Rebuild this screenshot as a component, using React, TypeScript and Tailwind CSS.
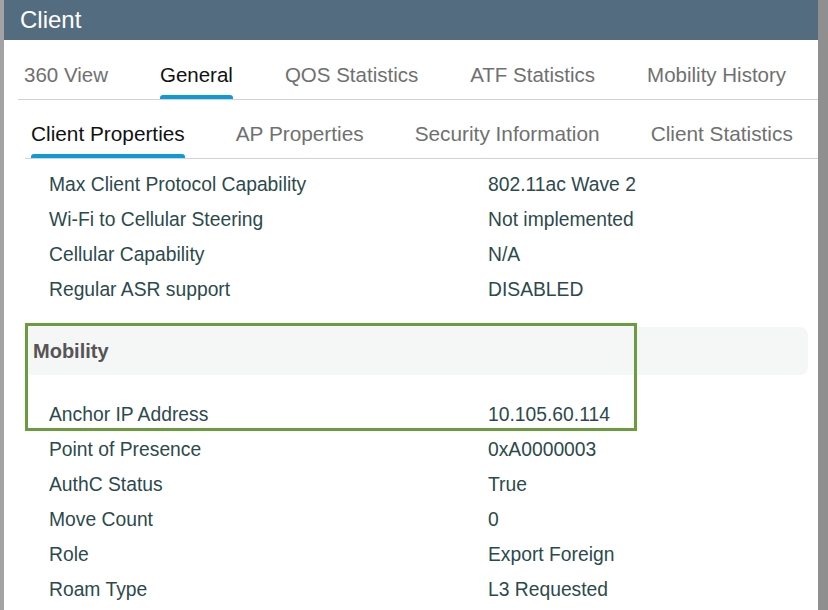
const tabs = ["360 View", "General", "QOS Statistics", "ATF Statistics", "Mobility History"];
const subTabs = ["Client Properties", "AP Properties", "Security Information", "Client Statistics"];

const topRows: [string, string][] = [
  ["Max Client Protocol Capability", "802.11ac Wave 2"],
  ["Wi-Fi to Cellular Steering", "Not implemented"],
  ["Cellular Capability", "N/A"],
  ["Regular ASR support", "DISABLED"],
];

const mobilityRows: [string, string][] = [
  ["Anchor IP Address", "10.105.60.114"],
  ["Point of Presence", "0xA0000003"],
  ["AuthC Status", "True"],
  ["Move Count", "0"],
  ["Role", "Export Foreign"],
  ["Roam Type", "L3 Requested"],
];

function Row({ label, value }: { label: string; value: string }) {
  return (
    <div className="grid h-[35px] grid-cols-[439px_1fr] items-center pl-[45px] text-[19.3px] text-[#2c4a4d]">
      <span>{label}</span>
      <span>{value}</span>
    </div>
  );
}

export default function App() {
  return (
    <div
      className="relative flex h-[610px] w-[828px] overflow-hidden bg-white"
      style={{ fontFamily: '"Liberation Sans", Arial, sans-serif' }}
    >
      <div className="w-[4px] shrink-0 bg-[#a3a3a5]" />

      <div className="flex min-w-0 flex-1 flex-col">
        <div className="flex h-[40px] items-center bg-[#536c7f] pl-[16px] text-[24px] text-white">
          Client
        </div>

        {/* main tabs */}
        <div className="ml-[14px] flex gap-[42px] border-b border-[#d2d2d2] pl-[1px]">
          {tabs.map((t) => {
            const active = t === "General";
            return (
              <div key={t} className="flex flex-col px-[5px] pt-[23px]">
                <span className={`text-[20.5px] leading-[24px] ${active ? "text-[#111]" : "text-[#707070]"}`}>{t}</span>
                <div className={`mt-[8px] h-[4px] rounded-t-[3px] ${active ? "bg-[#0d9bd8]" : "bg-transparent"}`} />
              </div>
            );
          })}
        </div>

        {/* sub tabs */}
        <div className="ml-[21px] flex gap-[39px] border-b border-[#d2d2d2]">
          {subTabs.map((t) => {
            const active = t === "Client Properties";
            return (
              <div key={t} className="flex flex-col px-[6px] pt-[22px]">
                <span className={`text-[20.8px] leading-[24px] ${active ? "text-[#111]" : "text-[#707070]"}`}>{t}</span>
                <div className={`mt-[8px] h-[4px] rounded-t-[3px] ${active ? "bg-[#0d9bd8]" : "bg-transparent"}`} />
              </div>
            );
          })}
        </div>

        <div className="pt-[9px]">
          {topRows.map(([l, v]) => (
            <Row key={l} label={l} value={v} />
          ))}
        </div>

        <div className="ml-[21px] mr-[10px] mt-[19px] flex h-[48px] items-center rounded-lg bg-[#f5f6f6] pl-[8px] text-[20px] font-bold text-[#555]">
          Mobility
        </div>

        <div className="pt-[23px]">
          {mobilityRows.map(([l, v]) => (
            <Row key={l} label={l} value={v} />
          ))}
        </div>
      </div>

      <div className="w-[10px] shrink-0 bg-[#8f8f8f]" />

      {/* highlight annotation */}
      <div className="absolute left-[25px] top-[323px] h-[108px] w-[612px] border-[3px] border-[#6a9b3e]" />
    </div>
  );
}
